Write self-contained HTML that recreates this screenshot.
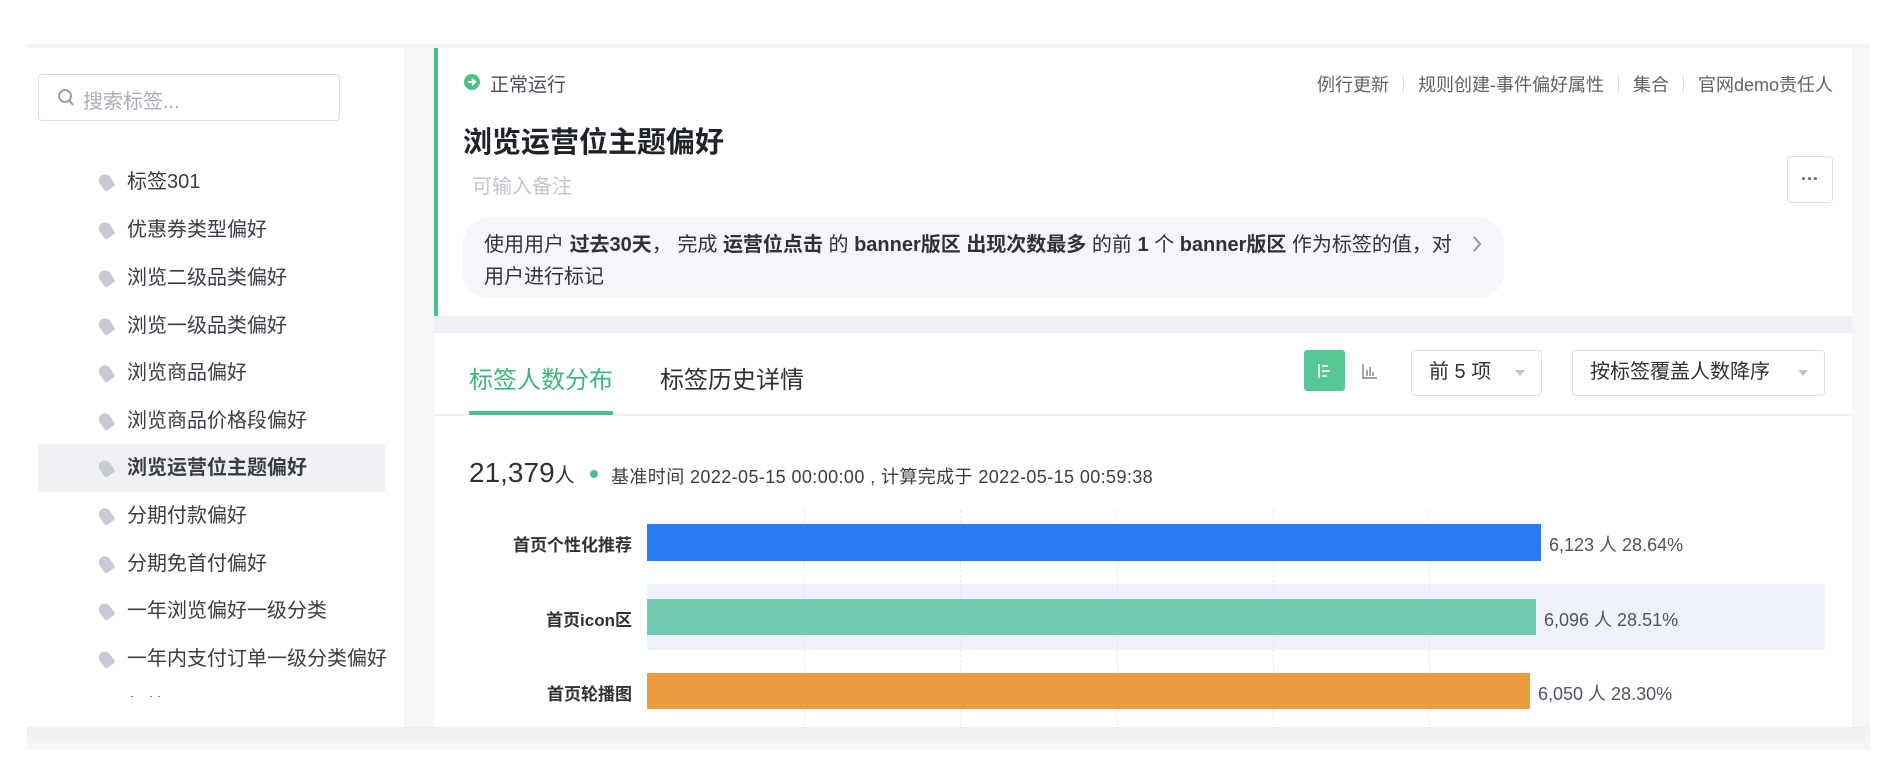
<!DOCTYPE html>
<html><head><meta charset="utf-8"><style>
*{margin:0;padding:0;box-sizing:border-box}
body{width:1882px;height:762px;background:#fff;position:relative;overflow:hidden;font-family:"Liberation Sans","Noto Sans CJK SC",sans-serif;color:#303133}
.a{position:absolute}
.item{position:absolute;left:38px;width:347px;height:48px;line-height:48px;font-size:20px;color:#3a3d45;padding-left:89px;white-space:nowrap}
.item .tg{position:absolute;left:62px;top:16px;width:12px;height:16px;background:#c5cad3;border-radius:6px 6px 2px 2px;transform:rotate(-35deg)}
.sel{background:#f0f1f4;font-weight:bold}
.meta{font-size:18px;color:#606266;white-space:nowrap}
.sep{display:inline-block;width:1px;height:18px;background:#dcdfe6;margin:0 14px;vertical-align:-2px}
.grid{position:absolute;top:510px;height:217px;border-left:1px dashed #e6e8ee}
.lbl{position:absolute;right:1250px;font-size:17px;font-weight:bold;color:#303133;text-align:right;white-space:nowrap}
.val{position:absolute;font-size:18px;color:#4f5460;white-space:nowrap}
</style></head><body>
<div class="a" style="left:27px;top:44px;width:1843px;height:4px;background:#f3f4f6"></div>
<div class="a" style="left:404px;top:48px;width:30px;height:680px;background:#f5f6f8"></div>
<div class="a" style="left:1852px;top:48px;width:18px;height:680px;background:#f5f6f8"></div>
<div class="a" style="left:434px;top:316px;width:1418px;height:17px;background:#eef0f3"></div>
<div class="a" style="left:27px;top:727px;width:1843px;height:23px;background:linear-gradient(#eceef1,#f6f7f8)"></div>

<div class="a" style="left:38px;top:74px;width:302px;height:47px;border:1.5px solid #d9dce2;border-radius:4px"></div>
<svg class="a" style="left:57px;top:88px" width="18" height="20" viewBox="0 0 18 20"><circle cx="8" cy="8" r="6" fill="none" stroke="#9aa0ab" stroke-width="2"/><path d="M12 12l4 5" stroke="#9aa0ab" stroke-width="2"/></svg>
<div class="a" style="left:83px;top:85px;font-size:20px;color:#a8adb7">搜索标签...</div>
<div class="item" style="top:158px"><i class="tg"></i>标签301</div>
<div class="item" style="top:206px"><i class="tg"></i>优惠券类型偏好</div>
<div class="item" style="top:254px"><i class="tg"></i>浏览二级品类偏好</div>
<div class="item" style="top:302px"><i class="tg"></i>浏览一级品类偏好</div>
<div class="item" style="top:349px"><i class="tg"></i>浏览商品偏好</div>
<div class="item" style="top:397px"><i class="tg"></i>浏览商品价格段偏好</div>
<div class="item sel" style="top:444px"><i class="tg"></i>浏览运营位主题偏好</div>
<div class="item" style="top:492px"><i class="tg"></i>分期付款偏好</div>
<div class="item" style="top:540px"><i class="tg"></i>分期免首付偏好</div>
<div class="item" style="top:587px"><i class="tg"></i>一年浏览偏好一级分类</div>
<div class="item" style="top:635px"><i class="tg"></i>一年内支付订单一级分类偏好</div>
<div class="a" style="left:38px;top:683px;width:347px;height:14px;overflow:hidden"><div class="item" style="top:0;left:0"><i class="tg"></i>标签302</div></div>

<div class="a" style="left:434px;top:48px;width:4px;height:268px;background:#4cc08a"></div>
<svg class="a" style="left:463px;top:73px" width="18" height="18" viewBox="0 0 18 18"><circle cx="9" cy="9" r="8" fill="#4cc08a"/><path d="M5 9h7M9 6l3 3-3 3" stroke="#fff" stroke-width="2" fill="none"/></svg>
<div class="a" style="left:490px;top:70px;font-size:19px;color:#4a4f5a">正常运行</div>
<div class="a meta" style="right:49px;top:71px">例行更新<span class="sep"></span>规则创建-事件偏好属性<span class="sep"></span>集合<span class="sep"></span>官网demo责任人</div>
<div class="a" style="left:463px;top:119px;font-size:29px;font-weight:bold;color:#1f2329">浏览运营位主题偏好</div>
<div class="a" style="left:472px;top:170px;font-size:20px;color:#c0c4cc">可输入备注</div>
<div class="a" style="left:1787px;top:156px;width:46px;height:47px;border:1.5px solid #dcdfe6;border-radius:4px;text-align:center;line-height:44px;font-size:18px;color:#606266;font-weight:bold">···</div>
<div class="a" style="left:463px;top:218px;width:1041px;height:80px;background:#f4f6f9;border-radius:26px"></div>
<div class="a" style="left:484px;top:229px;font-size:20px;line-height:32px;color:#303133;width:1000px;white-space:nowrap">使用用户 <b>过去30天</b>， 完成 <b>运营位点击</b> 的 <b>banner版区</b> <b>出现次数最多</b> 的前 <b>1</b> 个 <b>banner版区</b> 作为标签的值，对<br>用户进行标记</div>
<svg class="a" style="left:1471px;top:235px" width="12" height="18" viewBox="0 0 12 18"><path d="M3 2l6 7-6 7" stroke="#909399" stroke-width="2" fill="none"/></svg>

<div class="a" style="left:469px;top:360px;font-size:24px;color:#3bb77e">标签人数分布</div>
<div class="a" style="left:660px;top:360px;font-size:24px;color:#303133">标签历史详情</div>
<div class="a" style="left:434px;top:414px;width:1418px;height:2px;background:#eef0f4"></div>
<div class="a" style="left:469px;top:411px;width:144px;height:4px;background:#4cc08a"></div>
<div class="a" style="left:1304px;top:350px;width:41px;height:41px;background:#56c795;border-radius:3px"></div>
<svg class="a" style="left:1315px;top:361px" width="20" height="20" viewBox="0 0 20 20"><path d="M4 3v14M7 5h6M7 10h8M7 15h5" stroke="#fff" stroke-width="1.6" fill="none"/></svg>
<svg class="a" style="left:1360px;top:361px" width="20" height="20" viewBox="0 0 20 20"><path d="M3 3v14h14M7 15V9M10 15V6M13 15v-4" stroke="#7a808c" stroke-width="1.4" fill="none"/></svg>
<div class="a" style="left:1411px;top:350px;width:131px;height:46px;border:1.5px solid #dcdfe6;border-radius:4px;font-size:20px;line-height:43px;padding-left:17px;color:#303133">前 5 项<span style="position:absolute;right:16px;top:19px;border:5px solid transparent;border-top:6px solid #c0c4cc"></span></div>
<div class="a" style="left:1572px;top:350px;width:253px;height:46px;border:1.5px solid #dcdfe6;border-radius:4px;font-size:20px;line-height:43px;padding-left:17px;color:#303133">按标签覆盖人数降序<span style="position:absolute;right:16px;top:19px;border:5px solid transparent;border-top:6px solid #c0c4cc"></span></div>

<div class="a" style="left:469px;top:457px;font-size:28px;color:#303133">21,379<span style="font-size:20px">人</span></div>
<div class="a" style="left:590px;top:470px;width:8px;height:8px;border-radius:50%;background:#4cc08a"></div>
<div class="a" style="left:611px;top:463px;font-size:18px;color:#3a3d45;letter-spacing:0.4px;white-space:nowrap">基准时间 2022-05-15 00:00:00 , 计算完成于 2022-05-15 00:59:38</div>

<div class="a" style="left:647px;top:584px;width:1178px;height:66px;background:#eef2f9"></div>
<div class="grid" style="left:804px"></div><div class="grid" style="left:960px"></div><div class="grid" style="left:1117px"></div><div class="grid" style="left:1273px"></div><div class="grid" style="left:1429px"></div>
<div class="a" style="left:647px;top:524px;width:894px;height:37px;background:#2b7bf5"></div>
<div class="a" style="left:647px;top:599px;width:889px;height:36px;background:#72cbb0"></div>
<div class="a" style="left:647px;top:673px;width:883px;height:36px;background:#eb9c3e"></div>
<div class="lbl" style="top:531px">首页个性化推荐</div>
<div class="lbl" style="top:606px">首页icon区</div>
<div class="lbl" style="top:680px">首页轮播图</div>
<div class="val" style="left:1549px;top:531px">6,123 人 28.64%</div>
<div class="val" style="left:1544px;top:606px">6,096 人 28.51%</div>
<div class="val" style="left:1538px;top:680px">6,050 人 28.30%</div>
</body></html>
